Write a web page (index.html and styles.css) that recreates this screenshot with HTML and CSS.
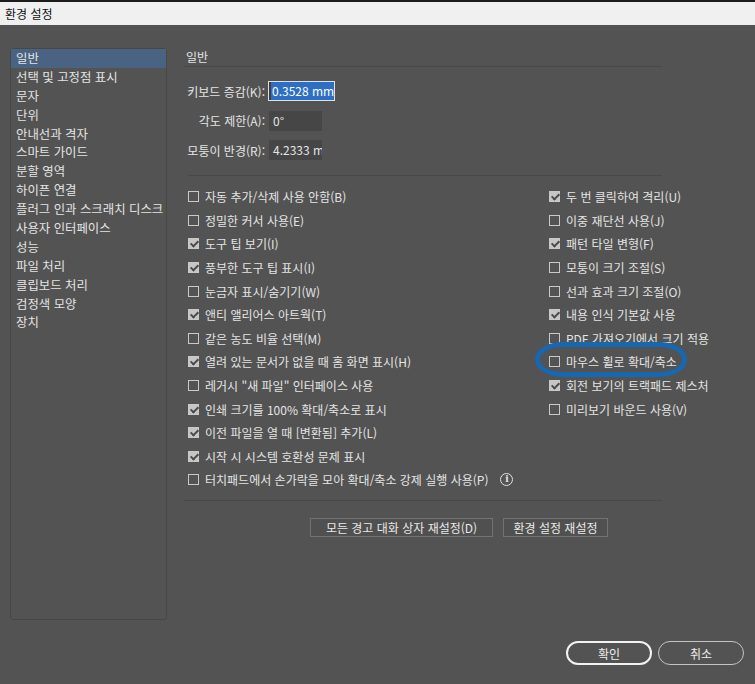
FILE: index.html
```html
<!DOCTYPE html>
<html lang="ko">

<head>
    <meta charset="UTF-8">
    <title>환경 설정</title>
    <link rel="stylesheet" href="styles.css">
</head>

<body>
    <div class="titlebar">환경 설정</div>

    <div class="dialog">
        <ul class="nav">
            <li class="active">일반</li>
            <li>선택 및 고정점 표시</li>
            <li>문자</li>
            <li>단위</li>
            <li>안내선과 격자</li>
            <li>스마트 가이드</li>
            <li>분할 영역</li>
            <li>하이픈 연결</li>
            <li>플러그 인과 스크래치 디스크</li>
            <li>사용자 인터페이스</li>
            <li>성능</li>
            <li>파일 처리</li>
            <li>클립보드 처리</li>
            <li>검정색 모양</li>
            <li>장치</li>
        </ul>

        <div class="pane">
            <h2 class="pane-title">일반</h2>

            <div class="fields">
                <label>키보드 증감(K):</label>
                <div class="input focused"><span class="sel">0.3528 mm</span></div>
                <label>각도 제한(A):</label>
                <div class="input">0°</div>
                <label>모퉁이 반경(R):</label>
                <div class="input">4.2333 mm</div>
            </div>

            <div class="options">
                <div class="col">
                    <div class="opt"><span class="box"></span>자동 추가/삭제 사용 안함(B)</div>
                    <div class="opt"><span class="box"></span>정밀한 커서 사용(E)</div>
                    <div class="opt"><span class="box on"></span>도구 팁 보기(I)</div>
                    <div class="opt"><span class="box on"></span>풍부한 도구 팁 표시(I)</div>
                    <div class="opt"><span class="box"></span>눈금자 표시/숨기기(W)</div>
                    <div class="opt"><span class="box on"></span>앤티 앨리어스 아트웍(T)</div>
                    <div class="opt"><span class="box"></span>같은 농도 비율 선택(M)</div>
                    <div class="opt"><span class="box on"></span>열려 있는 문서가 없을 때 홈 화면 표시(H)</div>
                    <div class="opt"><span class="box"></span>레거시 "새 파일" 인터페이스 사용</div>
                    <div class="opt"><span class="box on"></span>인쇄 크기를 100% 확대/축소로 표시</div>
                    <div class="opt"><span class="box on"></span>이전 파일을 열 때 [변환됨] 추가(L)</div>
                    <div class="opt"><span class="box on"></span>시작 시 시스템 호환성 문제 표시</div>
                    <div class="opt"><span class="box"></span>터치패드에서 손가락을 모아 확대/축소 강제 실행 사용(P)<span class="info">i</span></div>
                </div>
                <div class="col">
                    <div class="opt"><span class="box on"></span>두 번 클릭하여 격리(U)</div>
                    <div class="opt"><span class="box"></span>이중 재단선 사용(J)</div>
                    <div class="opt"><span class="box on"></span>패턴 타일 변형(F)</div>
                    <div class="opt"><span class="box"></span>모퉁이 크기 조절(S)</div>
                    <div class="opt"><span class="box"></span>선과 효과 크기 조절(O)</div>
                    <div class="opt"><span class="box on"></span>내용 인식 기본값 사용</div>
                    <div class="opt"><span class="box"></span>PDF 가져오기에서 크기 적용</div>
                    <div class="opt"><span class="box"></span>마우스 휠로 확대/축소</div>
                    <div class="opt"><span class="box on"></span>회전 보기의 트랙패드 제스처</div>
                    <div class="opt"><span class="box"></span>미리보기 바운드 사용(V)</div>
                </div>
            </div>

            <div class="resets">
                <button class="btn wide">모든 경고 대화 상자 재설정(D)</button>
                <button class="btn">환경 설정 재설정</button>
            </div>
        </div>
    </div>

    <div class="footer">
        <button class="pill primary">확인</button>
        <button class="pill">취소</button>
    </div>

    <!-- annotation ring drawn over the screenshot -->
    <div class="mark"></div>
</body>

</html>
```

FILE: styles.css
```css
body {
    margin: 0;
    background-color: #535353;
    font-family: "Noto Sans CJK KR", "Noto Sans", sans-serif;
    font-size: 12px;
    color: #e4e4e4;
    height: 684px;
    overflow: hidden;
    position: relative;
}

.titlebar {
    height: 23px;
    line-height: 23px;
    border-top: 2px solid #1c1c1c;
    background-color: #f0f0f0;
    color: #111;
    padding-left: 5px;
}

.dialog {
    display: flex;
    gap: 17px;
    padding: 23px 0 0 10px;
}

.nav {
    list-style: none;
    margin: 0;
    padding: 0;
    width: 157px;
    height: 572px;
    box-sizing: border-box;
    border: 1px solid #474747;
    border-radius: 3px;
    font-size: 12.4px;
    flex: none;
}

.nav li {
    height: 18.9px;
    line-height: 18.9px;
    padding-left: 5px;
    white-space: nowrap;
}

.nav li.active {
    background-color: #4a6383;
}

.pane {
    width: 478px;
    flex: none;
}

.pane-title {
    margin: 0;
    font-size: 12px;
    font-weight: normal;
    height: 18px;
    line-height: 18px;
    padding-left: 2px;
    border-bottom: 1px solid #484848;
}

.fields {
    display: grid;
    grid-template-columns: 80px auto;
    grid-auto-rows: 20px;
    row-gap: 9.5px;
    align-items: center;
    justify-items: start;
    margin: 14px 0 0 4px;
    padding-bottom: 15px;
    border-bottom: 1px solid #484848;
}

.fields label {
    justify-self: end;
    padding-right: 3px;
    white-space: nowrap;
}

.input {
    width: 53px;
    height: 20px;
    line-height: 20px;
    box-sizing: border-box;
    background-color: #464646;
    padding-left: 4px;
    overflow: hidden;
    white-space: nowrap;
    margin-left: 1px;
}

.input.focused {
    width: 67px;
    margin-left: 0;
    border: 1px solid #e0e0e0;
    background-color: #3e3e3e;
    padding-left: 2px;
    line-height: 18px;
}

.sel {
    background-color: #2d6fc4;
    color: #fff;
    padding: 1px 1px;
}

.options {
    display: flex;
    padding: 9px 0 8px 4px;
    border-bottom: 1px solid #484848;
}

.col {
    width: 361px;
    flex: none;
}

.col + .col {
    width: auto;
}

.opt {
    display: flex;
    align-items: center;
    height: 23.6px;
    white-space: nowrap;
}

.box {
    width: 11px;
    height: 11px;
    box-sizing: border-box;
    border: 1px solid #c9c9c9;
    margin-right: 6px;
    position: relative;
    flex: none;
}

.box.on {
    background-color: #c6c6c6;
}

.box.on::after {
    content: "";
    position: absolute;
    left: 3px;
    top: 0px;
    width: 3px;
    height: 6px;
    border: solid #4a4a4a;
    border-width: 0 2px 2px 0;
    transform: rotate(45deg);
}

.info {
    width: 11px;
    height: 11px;
    border: 1px solid #e0e0e0;
    border-radius: 50%;
    margin-left: 12px;
    font-size: 9px;
    font-weight: bold;
    line-height: 11px;
    text-align: center;
    font-family: "DejaVu Serif", serif;
}

.resets {
    display: flex;
    gap: 10px;
    margin: 17px 0 0 126px;
}

.btn {
    height: 19px;
    width: 105px;
    padding: 0;
    border: 1px solid #727272;
    background-color: #505050;
    color: #e8e8e8;
    font-family: inherit;
    font-size: 12px;
}

.btn.wide {
    width: 183px;
}

.footer {
    display: flex;
    justify-content: flex-end;
    gap: 6px;
    margin-top: 21px;
    padding-right: 11px;
}

.pill {
    width: 86px;
    height: 24px;
    border-radius: 12px;
    border: 1px solid #c4c4c4;
    background-color: #535353;
    color: #ececec;
    font-family: inherit;
    font-size: 12px;
    padding: 0;
}

.pill.primary {
    border: 2px solid #f2f2f2;
}

.mark {
    position: absolute;
    left: 535px;
    top: 342px;
    width: 152px;
    height: 35px;
    box-sizing: border-box;
    border: 5px solid #1767b1;
    border-radius: 28px / 17px;
}
```
